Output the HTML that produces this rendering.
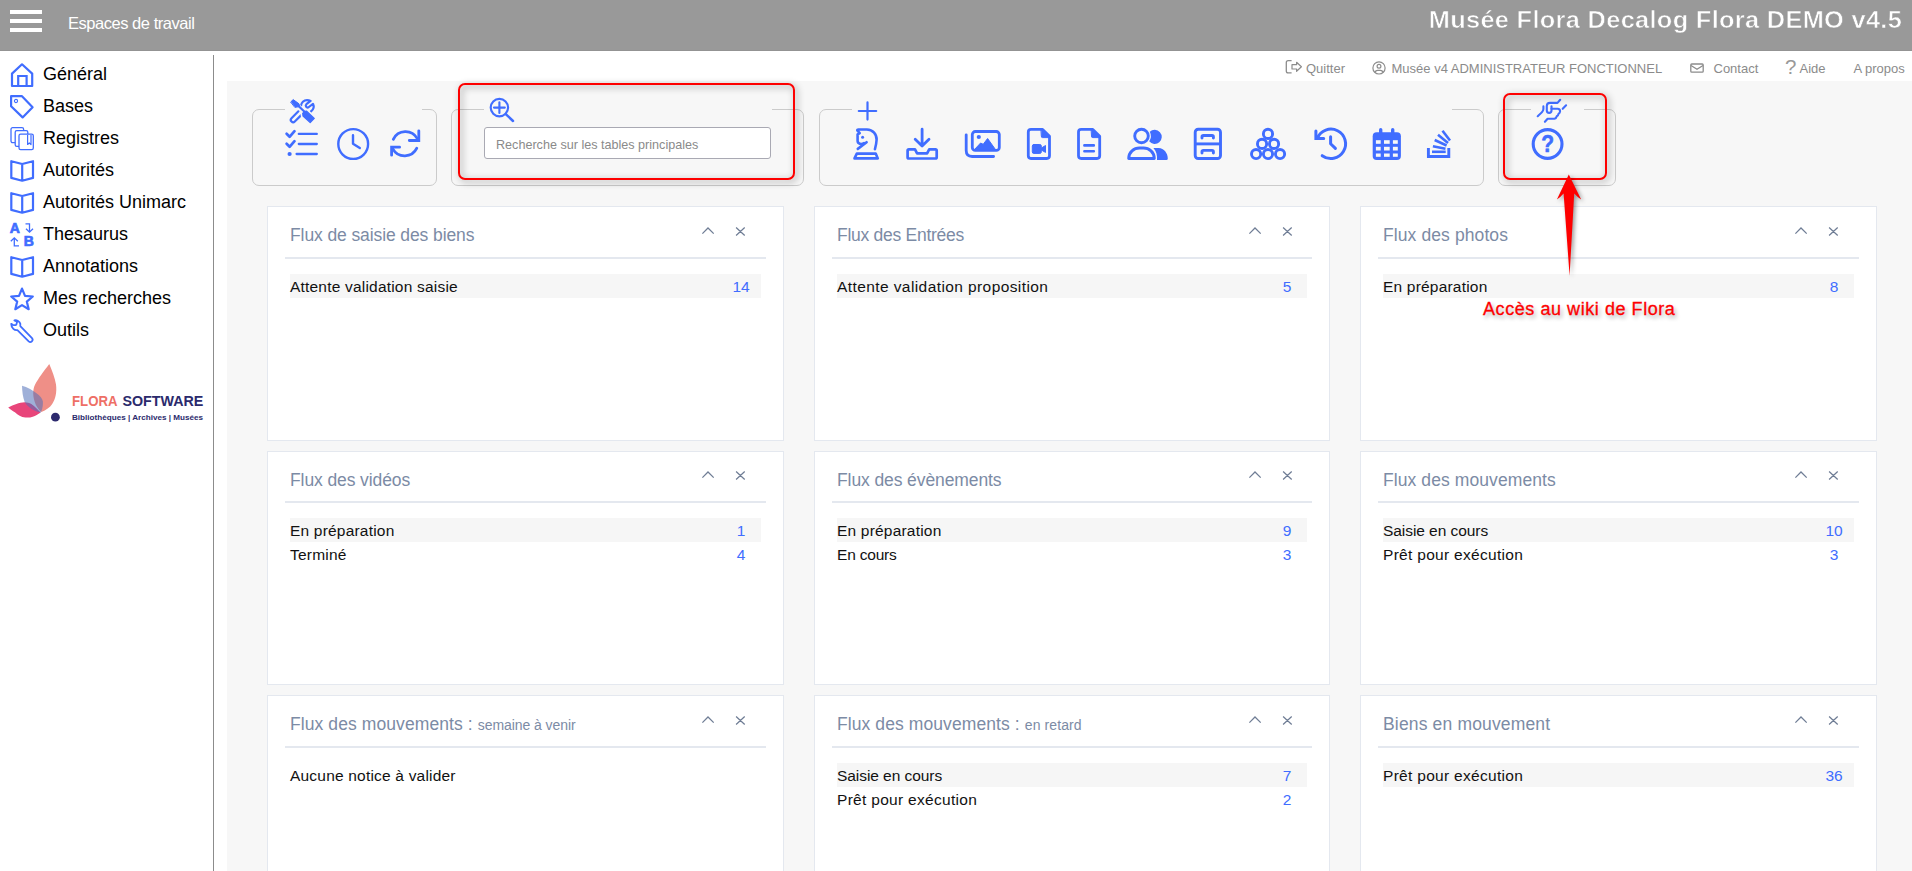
<!DOCTYPE html>
<html lang="fr">
<head>
<meta charset="utf-8">
<title>Musée Flora Decalog Flora DEMO v4.5</title>
<style>
*{box-sizing:border-box}
html,body{margin:0;padding:0}
body{width:1912px;height:871px;overflow:hidden;background:#fff;position:relative;font-family:"Liberation Sans",sans-serif;color:#000}
svg{display:block;overflow:visible}
.abs{position:absolute}
/* header */
#hdr{position:absolute;left:0;top:0;width:1912px;height:51px;background:#999;border-bottom:1px solid #939393}
#burger{position:absolute;left:10px;top:10px;width:32px;height:22px}
#burger i{position:absolute;left:0;width:32px;height:4px;background:#fff}
#ws{position:absolute;left:68px;top:12px;color:#fff;font-size:16.5px;line-height:22px;white-space:nowrap;letter-spacing:-.47px}
#apptitle{position:absolute;right:10px;top:5px;color:#fff;font-weight:bold;font-size:23.2px;line-height:30px;white-space:nowrap;letter-spacing:.3px;transform:scaleX(1.093);transform-origin:100% 50%;-webkit-text-stroke:.55px #999}
/* side */
#side{position:absolute;left:0;top:50px;width:213px;height:821px}
#vline{position:absolute;left:213px;top:55px;width:1px;height:816px;background:#8c8c8c}
.nav{position:absolute;left:0;width:213px;height:32px}
.nav svg{position:absolute;left:8px;top:3px;width:28px;height:28px}
.nav span{position:absolute;left:43px;top:6px;font-size:18px;line-height:22px;white-space:nowrap;color:#000}
/* top menu */
#topmenu{position:absolute;left:227px;top:52px;width:1685px;height:29px;color:#8b8b8b;font-size:13px}
#topmenu a{position:absolute;top:9px;line-height:15px;white-space:nowrap}
#topmenu svg{position:absolute}
/* main */
#main{position:absolute;left:227px;top:81px;width:1685px;height:790px;background:#f7f7f7}
.fs{position:absolute;border:1px solid #cbcbcb;border-radius:7px}
.fs .gap{position:absolute;top:-1px;height:1px;background:#f7f7f7}
#q{position:absolute;left:257px;top:46px;width:287px;height:32px;border:1px solid #a9a9b3;border-radius:3px;background:#fff;padding:3px 0 0 11px;margin:0;font-family:"Liberation Sans",sans-serif;font-size:12.7px;color:#333;outline:none}
#ql{position:absolute;left:269px;top:50px;height:29px;line-height:29px;font-size:12.6px;color:#8a8a8a;white-space:nowrap;pointer-events:none}
.redbox{position:absolute;border:2.6px solid #fe0000;border-radius:7px;filter:drop-shadow(2.5px 2.5px 3.5px rgba(0,0,0,.45))}
#annotxt{position:absolute;left:1483px;top:298px;font-size:18px;line-height:22px;color:#fe0000;white-space:nowrap;letter-spacing:.56px;-webkit-text-stroke:.3px #fe0000;text-shadow:2px 3px 4px rgba(0,0,0,.33)}
/* cards */
.card{position:absolute;width:517px;height:234px;background:#fff;border:1px solid #e4e8ef}
.card h3{position:absolute;left:22px;top:16px;margin:0;font-weight:normal;font-size:17.5px;line-height:24px;color:#7c8ba5;white-space:nowrap;letter-spacing:-.1px}
.card h3 small{font-size:14px;letter-spacing:.1px}
.card .hr{position:absolute;left:17px;right:17px;top:49px;height:2px;background:#e4e8ef}
.card .ctl{position:absolute;left:430px;top:17px;width:52px;height:16px;fill:none;stroke:#6f7d95;stroke-width:1.25}
.row{position:absolute;left:22px;right:22px;height:24px;padding-top:1px;font-size:15.5px;letter-spacing:.2px;line-height:24px;color:#111;white-space:nowrap}
.row.z{background:#f6f6f6}
.row b{position:absolute;right:0;top:1px;letter-spacing:0;width:40px;text-align:center;font-weight:normal;color:#406dff}
</style>
</head>
<body>
<div id="hdr">
  <div id="burger"><i style="top:0"></i><i style="top:9px"></i><i style="top:18px"></i></div>
  <div id="ws">Espaces de travail</div>
  <div id="apptitle">Musée Flora Decalog Flora DEMO v4.5</div>
</div>
<nav id="side">
<a class="nav" style="top:7px"><svg viewBox="0 0 28 28" fill="none" stroke="#406dff" stroke-width="2.2" stroke-linejoin="round"><path d="M4 13.6 L14 4.3 L24.2 13.6 V26 H4 Z"/><path d="M10.2 26 V16 H18.6 V26" stroke-linejoin="miter"/></svg><span>Général</span></a>
<a class="nav" style="top:39px"><svg viewBox="0 0 28 28" fill="none" stroke="#406dff" stroke-width="2.2" stroke-linejoin="round"><path d="M3.1 4.2 H14 L24.6 15.2 L14.6 25.4 L3.1 14.2 Z"/><circle cx="8" cy="9" r="1.6" stroke-width="1.1"/></svg><span>Bases</span></a>
<a class="nav" style="top:71px"><svg viewBox="0 0 28 28" fill="#fff" stroke="#406dff" stroke-width="1.3" stroke-linejoin="round"><rect x="3" y="3.7" width="12.6" height="15" rx="1.6"/><rect x="7.2" y="6.7" width="12.6" height="15.6" rx="1.6"/><rect x="11" y="10.2" width="14.3" height="15.4" rx="1.6"/><path d="M19.6 11 V20.5 L21.3 19 L23 20.5 V11" fill="none" stroke-width="1.2"/></svg><span>Registres</span></a>
<a class="nav" style="top:103px"><svg viewBox="0 0 28 28" fill="none" stroke="#406dff" stroke-width="2.2" stroke-linejoin="round"><path d="M3.3 5.2 L14.2 8 L25 5.2 V21.9 L14.2 24.7 L3.3 21.9 Z M14.2 8 V24.7"/></svg><span>Autorités</span></a>
<a class="nav" style="top:135px"><svg viewBox="0 0 28 28" fill="none" stroke="#406dff" stroke-width="2.2" stroke-linejoin="round"><path d="M3.3 5.2 L14.2 8 L25 5.2 V21.9 L14.2 24.7 L3.3 21.9 Z M14.2 8 V24.7"/></svg><span>Autorités Unimarc</span></a>
<a class="nav" style="top:167px"><svg viewBox="0 0 28 28" fill="none" stroke="#406dff" stroke-width="1.3"><text x="1.8" y="13" font-family="Liberation Sans, sans-serif" font-weight="bold" font-size="14" fill="#406dff" stroke="#406dff" stroke-width=".7">A</text><text x="15.8" y="26.4" font-family="Liberation Sans, sans-serif" font-weight="bold" font-size="14" fill="#406dff" stroke="#406dff" stroke-width=".7">B</text><path d="M17.5 3.8 H21.5 V11.5 M18 8.7 L21.5 12.2 L25 8.7"/><path d="M11 25.8 H6.3 V18.3 M2.8 21.3 L6.3 17.8 L9.8 21.3"/></svg><span>Thesaurus</span></a>
<a class="nav" style="top:199px"><svg viewBox="0 0 28 28" fill="none" stroke="#406dff" stroke-width="2.2" stroke-linejoin="round"><path d="M3.3 5.2 L14.2 8 L25 5.2 V21.9 L14.2 24.7 L3.3 21.9 Z M14.2 8 V24.7"/></svg><span>Annotations</span></a>
<a class="nav" style="top:231px"><svg viewBox="0 0 28 28" fill="none" stroke="#406dff" stroke-width="2.2" stroke-linejoin="round"><path d="M14 4.6 L17 11.9 L24.8 12.5 L18.8 17.6 L20.7 25.2 L14 21.1 L7.3 25.2 L9.2 17.6 L3.2 12.5 L11 11.9 Z"/></svg><span>Mes recherches</span></a>
<a class="nav" style="top:263px"><svg viewBox="0 0 28 28" fill="none" stroke="#406dff" stroke-width="1.8" stroke-linejoin="round"><path d="M6.4 4.4 C8.7 3.8 11.8 5.4 12.3 7.8 L12.3 10.1 L24 22.1 A2.34 2.34 0 0 1 20.7 25.4 L9.4 14.1 C6.8 14.6 3.2 12.4 3.2 7.8 L4.8 8.7 C6 9.3 7.5 9.1 8.3 8.7 L9.1 5.8 Z"/></svg><span>Outils</span></a>
<svg id="logo" class="abs" style="left:0;top:305px;width:213px;height:80px" viewBox="0 355 213 80">
<path d="M49.25 364.1 C44 371 38 379 35.1 384.6 C32.5 390 32.5 397 35.8 404.8 C37.5 408 39.5 410.5 41.4 412 C46 410 50 407.5 52.2 404 C55.5 399.5 57 392 56 384.6 C55 378 52 370.5 49.25 364.1 Z" fill="#ef8f87"/>
<path d="M8.2 407.4 C11 406 13.5 405 16.4 404 C19 403 22 402.2 24.6 402.2 C27 402.3 29.5 403 31.3 404 C35 406.5 38 410 40.7 412.6 C38 414.5 35.5 416 32.8 416.7 C30.5 417.5 28 417.8 25.4 417.5 C21 417 18 415 14.9 412.2 C12.5 410.8 10 409 8.2 407.4 Z" fill="#e8457a"/>
<path d="M22 385.7 C27 387 33 390 38.8 395.1 C42 398 43.5 401 42.9 404 C42.7 407.5 42 410 40.7 412.6 C36 411.5 32.5 410 29.9 407.8 C27 405.5 25.3 403.5 24.6 401.8 C22.8 397 22.2 391.5 22 385.7 Z" fill="#506fb8" fill-opacity=".55"/>
<circle cx="55.4" cy="417.2" r="4.4" fill="#2d2a6e"/>
<text x="72" y="406.2" font-family="Liberation Sans, sans-serif" font-weight="bold" font-size="14" fill="#ee6f66" textLength="45.5" lengthAdjust="spacingAndGlyphs">FLORA</text>
<text x="122.4" y="406.2" font-family="Liberation Sans, sans-serif" font-weight="bold" font-size="14" fill="#2b2a6c" textLength="81" lengthAdjust="spacingAndGlyphs">SOFTWARE</text>
<text x="72" y="420.1" font-family="Liberation Sans, sans-serif" font-weight="bold" font-size="7.6" fill="#2b2a6c" textLength="131" lengthAdjust="spacingAndGlyphs">Bibliothèques | Archives | Musées</text>
</svg>
</nav>
<div id="vline"></div>
<nav id="topmenu">
<svg style="left:1058px;top:7px;width:18px;height:16px" viewBox="1285 59 18 16" fill="none" stroke="#8c8c8c" stroke-width="1.3" stroke-linejoin="round"><path d="M1291.6 60.7 H1288.2 Q1286.3 60.7 1286.3 62.6 V71 Q1286.3 72.9 1288.2 72.9 H1291.6"/><path d="M1292 64.7 H1296.6 V62.3 L1301.4 66.8 L1296.6 71.3 V69 H1292 Z" stroke-width="1.2"/></svg>
<a style="left:1079px">Quitter</a>
<svg style="left:1144px;top:8px;width:16px;height:16px" viewBox="1371 60 16 16" fill="none" stroke="#8c8c8c" stroke-width="1.2"><circle cx="1379" cy="67.9" r="6.1"/><circle cx="1379" cy="66.2" r="1.9"/><path d="M1375 72.4 Q1375.6 70.4 1377.6 70.4 H1380.4 Q1382.4 70.4 1383 72.4"/></svg>
<a style="left:1164.5px">Musée v4 ADMINISTRATEUR FONCTIONNEL</a>
<svg style="left:1462px;top:10px;width:16px;height:12px" viewBox="1689 62 16 12" fill="none" stroke="#8c8c8c" stroke-width="1.3" stroke-linejoin="round"><rect x="1690.8" y="64" width="12.4" height="8.2" rx="1"/><path d="M1691 65.5 L1697 69.3 L1703 65.5"/></svg>
<a style="left:1486.5px">Contact</a>
<a style="left:1558px;top:5px;font-size:20.5px;line-height:20px;color:#999">?</a>
<a style="left:1572.5px">Aide</a>
<a style="left:1626.5px">A propos</a>
</nav>
<div id="main"><div class="fs" style="left:25px;top:28px;width:185px;height:77px"><div class="gap" style="left:32px;width:137px"></div></div>
<div class="fs" style="left:224px;top:28px;width:353px;height:77px"><div class="gap" style="left:32px;width:288px"></div></div>
<div class="fs" style="left:592px;top:28px;width:665px;height:77px"><div class="gap" style="left:32px;width:600px"></div></div>
<div class="fs" style="left:1271px;top:28px;width:118px;height:77px"><div class="gap" style="left:32px;width:53px"></div></div>
<input id="q" type="text" aria-label="Recherche"><label id="ql" for="q">Recherche sur les tables principales</label>
<svg class="abs" style="left:0;top:0;width:1685px;height:120px" viewBox="227 81 1685 120" fill="none" stroke="#406dff" stroke-linecap="round" stroke-linejoin="round">
<!-- outils / réglages -->
<g transform="translate(290 99)" stroke-width="2.2">
<path d="M11 7 C11 3.6 14 1.1 17 1.1 C18.4 1.1 19.6 1.4 20.6 1.9 L16.4 5.2 C15 6.6 16.2 8.9 18.2 8.5 L23 4.8 C24.2 7.4 23.5 10.6 20.9 12.5"/>
<path d="M8.4 12.3 L1.5 19.2 A2.3 2.3 0 0 0 4.8 22.5 L11.2 16.1"/>
<path d="M7 6 L15 13.4 M14.2 12.6 L16.4 12 L24.3 19.4 L20.2 23.6 L13 17 L12.7 14.4 Z" stroke="#f7f7f7" stroke-width="4.4"/>
<path d="M8.5 7 L14.8 13"/>
<path d="M0.9 2.8 L3.2 0.6 L9 4.8 L9.6 7.6 L5.2 8.3 Z" fill="#406dff" stroke-width="1"/>
<path d="M14.2 12.6 L16.4 12 L24.3 19.4 L20.2 23.6 L13 17 L12.7 14.4 Z" fill="#406dff" stroke-width="1.2"/>
</g>
<!-- liste de tâches -->
<g stroke-width="2.3">
<path d="M298.8 133.9 H316.8 M298.8 144 H316.8 M296.6 154 H316.8"/>
<path d="M286.6 133.8 L289.6 136.8 L294.5 131.2 M286.6 143.8 L289.6 146.8 L294.5 141.2" stroke-width="2.7"/>
<circle cx="289.6" cy="154" r="2.1" fill="#406dff" stroke="none"/>
</g>
<!-- horloge -->
<g stroke-width="2.4"><circle cx="353.2" cy="144" r="14.9"/><path d="M353 135.2 V143.8 L359.8 148"/></g>
<!-- actualiser -->
<g stroke-width="2.8">
<path d="M393.3 139.3 A13.5 13.5 0 0 1 417.2 138.4"/>
<path d="M418.8 130.8 V140.5 H409.3" stroke-linejoin="miter"/>
<path d="M416.8 148.2 A13.5 13.5 0 0 1 392.8 148.9"/>
<path d="M391.6 155.2 V147.2 H399.6" stroke-linejoin="miter"/>
</g>
<!-- recherche -->
<g stroke-width="2.15"><circle cx="499.4" cy="107.6" r="8.7"/><path d="M494 107.6 H504.8 M499.4 102.3 V112.9"/><path d="M505.8 114.1 L513 121" stroke-width="2.5"/></g>
<!-- ajouter -->
<path d="M858.8 111 H876.2 M867.5 102.4 V119.6" stroke-width="2.2"/>
<!-- cavalier -->
<g stroke-width="2.6">
<path d="M864 143.2 C861.2 144.8 857.6 144 857.6 140.8 V134.3 L859.7 133.1 L857.3 130.4 Q857.2 129.5 858.3 129.5 H866.9 C872.9 129.7 876.8 134.3 876.6 139.8 C876.4 144 875.6 146.6 874.9 149.2"/>
<path d="M857.8 148.9 L866.6 142.2"/>
<path d="M854.5 158.4 L856.8 153.6 H875.7 L877.8 158.4 Z"/>
<circle cx="862.6" cy="137.2" r="1.5" fill="#406dff" stroke="none"/>
</g>
<!-- entrées -->
<g stroke-width="2.8">
<path d="M922.1 129.2 V145.6 M915.2 139.2 L922.1 146 L929 139.2"/>
<path d="M907.6 150.6 Q907.6 149.3 908.9 149.3 H915 L917.1 153.4 H927.1 L929.2 149.3 H935.4 Q936.7 149.3 936.7 150.6 V157.2 Q936.7 158.5 935.4 158.5 H908.9 Q907.6 158.5 907.6 157.2 Z" stroke-width="2.7"/>
</g>
<!-- photos -->
<g stroke-width="2.8">
<rect x="972.3" y="131.5" width="27" height="18.9" rx="3"/>
<path d="M974.6 149.4 L980.6 143 L983.2 144.3 L987.6 138.5 L995.4 149.4 Z" fill="#406dff" stroke-width="1"/>
<circle cx="978.8" cy="137" r="2.1" fill="#406dff" stroke="none"/>
<path d="M966.2 134.8 V150.6 Q966.2 156.5 972.1 156.5 H993.6"/>
</g>
<!-- vidéos -->
<g stroke-width="2.8">
<path d="M1031 129.4 H1042.6 L1049.5 136.3 V155.8 Q1049.5 158.5 1046.8 158.5 H1031 Q1028.3 158.5 1028.3 155.8 V132.1 Q1028.3 129.4 1031 129.4 Z"/>
<path d="M1041.3 130 L1042.4 129.6 L1049.3 136.5 L1049 137.6 H1042.5 Q1041.3 137.6 1041.3 136.4 Z" fill="#406dff" stroke-width="1"/>
<rect x="1032.3" y="144.5" width="9" height="8.9" rx="1.5" fill="#406dff" stroke-width="1"/>
<path d="M1041.8 147.8 L1045.5 145.5 V152.4 L1041.8 150.3 Z" fill="#406dff" stroke-width="1"/>
</g>
<!-- documents -->
<g stroke-width="2.8">
<path d="M1081.2 129.4 H1092.8 L1099.7 136.3 V155.8 Q1099.7 158.5 1097 158.5 H1081.2 Q1078.5 158.5 1078.5 155.8 V132.1 Q1078.5 129.4 1081.2 129.4 Z"/>
<path d="M1091.5 130 L1092.6 129.6 L1099.5 136.5 L1099.2 137.6 H1092.7 Q1091.5 137.6 1091.5 136.4 Z" fill="#406dff" stroke-width="1"/>
<path d="M1084.4 145.4 H1093.8 M1084.4 151.3 H1093.8" stroke-width="2.6"/>
</g>
<!-- personnes -->
<g stroke-width="2.9">
<circle cx="1141.5" cy="136" r="6.8"/>
<path d="M1128.7 158.5 C1128.7 152 1134 148 1139.5 148 H1143.5 C1149 148 1154.3 152 1154.3 158.5 Z"/>
<path d="M1149.8 131.8 A7.06 7.06 0 1 1 1149.2 141.3 A9.3 9.3 0 0 0 1149.8 131.8 Z" fill="#406dff" stroke="none"/>
<path d="M1153.4 147.9 H1158.6 C1164 148.2 1167.8 153 1167.8 158.4 Q1167.8 159.9 1166.3 159.9 H1157 C1157.4 155 1156.2 151 1153.4 147.9 Z" fill="#406dff" stroke="none"/>
</g>
<!-- classeur -->
<g stroke-width="2.9">
<rect x="1195.2" y="129.2" width="25.3" height="29.3" rx="3"/>
<path d="M1195.2 143.9 H1220.5" stroke-linecap="butt"/>
<path d="M1202 138.1 V136.9 Q1202 135.5 1203.4 135.5 H1212 Q1213.4 135.5 1213.4 136.9 V138.1"/>
<path d="M1202 153 V151.8 Q1202 150.4 1203.4 150.4 H1212 Q1213.4 150.4 1213.4 151.8 V153"/>
</g>
<!-- ensembles -->
<g stroke-width="2.9">
<circle cx="1268" cy="133.9" r="4.6"/><circle cx="1262.05" cy="143.9" r="4.6"/><circle cx="1274.05" cy="143.9" r="4.6"/>
<circle cx="1256.1" cy="154.05" r="4.6"/><circle cx="1268" cy="154.05" r="4.6"/><circle cx="1280.05" cy="154.05" r="4.6"/>
</g>
<!-- historique -->
<g stroke-width="3">
<path d="M1317.3 138.2 A14.7 14.7 0 1 1 1322.2 155.7"/>
<path d="M1315.9 131 V138.5 H1323.7" stroke-linejoin="miter"/>
<path d="M1330.6 136.8 V143.7 L1335.4 148.4"/>
</g>
<!-- calendrier -->
<g fill="#406dff" stroke="none">
<path d="M1376.7 132.3 H1396.9 Q1400.9 132.3 1400.9 136.3 V155.9 Q1400.9 159.9 1396.9 159.9 H1376.7 Q1372.7 159.9 1372.7 155.9 V136.3 Q1372.7 132.3 1376.7 132.3 Z"/>
<rect x="1379" y="128" width="3.4" height="7" rx="1.7"/><rect x="1391" y="128" width="3.4" height="7" rx="1.7"/>
</g>
<g fill="#f7f7f7" stroke="none">
<rect x="1375.9" y="140.2" width="4.8" height="3.6"/><rect x="1384" y="140.2" width="5.7" height="3.6"/><rect x="1392.9" y="140.2" width="4.9" height="3.6"/>
<rect x="1375.9" y="146.8" width="4.8" height="3.7"/><rect x="1384" y="146.8" width="5.7" height="3.7"/><rect x="1392.9" y="146.8" width="4.9" height="3.7"/>
<rect x="1375.9" y="153.5" width="4.8" height="3.3"/><rect x="1384" y="153.5" width="5.7" height="3.3"/><rect x="1392.9" y="153.5" width="4.9" height="3.3"/>
</g>
<!-- piles -->
<g stroke-width="2.6" stroke-linecap="butt" stroke-linejoin="miter">
<path d="M1428.4 148 V156.5 H1448.8 V148" stroke-width="2.9"/>
<path d="M1432 151.8 H1445.7"/>
<path d="M1432.9 146.2 L1445.5 148.8"/>
<path d="M1434.7 140 L1446.6 145.5"/>
<path d="M1438 134.8 L1448 142.9"/>
<path d="M1442.5 130.8 L1450 140.5"/>
</g>
<!-- entraide -->
<g stroke-width="2.1">
<path d="M1537.7 116.2 C1540 114.2 1541.2 113.2 1542 112.2 C1543 111 1543.4 110 1543.4 109.1 V106.4"/>
<path d="M1560.2 99.8 L1557.5 102.9 H1550 Q1546.8 102.9 1546.8 106.1 V110.6 Q1546.8 112.9 1549.15 112.9 Q1551.5 112.9 1551.5 110.6 V106.3"/>
<path d="M1551.5 108.75 H1557.6 Q1560.1 108.9 1560.1 111.2 Q1560 112.9 1558.5 113.9 Q1558.2 115.6 1556.8 116.3 Q1556.3 118.4 1554.5 118.7 H1547.6 L1544.9 121.8"/>
<path d="M1562.7 108.8 L1566.1 105.3"/>
</g>
<!-- aide -->
<circle cx="1547.6" cy="144" r="14.4" stroke-width="3.1"/>
<text transform="translate(1547.6 151.9) scale(1 1.15)" x="0" y="0" text-anchor="middle" font-family="Liberation Sans, sans-serif" font-weight="bold" font-size="21" fill="#406dff" stroke="#406dff" stroke-width=".5">?</text>

</svg>


<section class="card" style="left:40px;top:125px;height:235px;width:517px">
  <h3>Flux de saisie des biens</h3>
  <svg class="ctl" viewBox="430 16 52 16"><path d="M434.4 25.65 L440 20 L445.7 25.65 M468.1 19.5 L476.7 27.5 M476.7 19.5 L468.1 27.5"/></svg>
  <div class="hr" style="top:50px"></div>
  <div class="row z" style="top:67px">Attente validation saisie<b>14</b></div>
</section>
<section class="card" style="left:587px;top:125px;height:235px;width:516px">
  <h3 style="letter-spacing:-.27px">Flux des Entrées</h3>
  <svg class="ctl" viewBox="430 16 52 16"><path d="M434.4 25.65 L440 20 L445.7 25.65 M468.1 19.5 L476.7 27.5 M476.7 19.5 L468.1 27.5"/></svg>
  <div class="hr" style="top:50px"></div>
  <div class="row z" style="top:67px;letter-spacing:0.41px">Attente validation proposition<b>5</b></div>
</section>
<section class="card" style="left:1133px;top:125px;height:235px;width:517px">
  <h3 style="letter-spacing:.1px">Flux des photos</h3>
  <svg class="ctl" viewBox="430 16 52 16"><path d="M434.4 25.65 L440 20 L445.7 25.65 M468.1 19.5 L476.7 27.5 M476.7 19.5 L468.1 27.5"/></svg>
  <div class="hr" style="top:50px"></div>
  <div class="row z" style="top:67px">En préparation<b>8</b></div>
</section>
<section class="card" style="left:40px;top:370px;width:517px">
  <h3>Flux des vidéos</h3>
  <svg class="ctl" style="top:16px" viewBox="430 16 52 16"><path d="M434.4 25.65 L440 20 L445.7 25.65 M468.1 19.5 L476.7 27.5 M476.7 19.5 L468.1 27.5"/></svg>
  <div class="hr"></div>
  <div class="row z" style="top:66px">En préparation<b>1</b></div>
  <div class="row" style="top:90px">Terminé<b>4</b></div>
</section>
<section class="card" style="left:587px;top:370px;width:516px">
  <h3>Flux des évènements</h3>
  <svg class="ctl" style="top:16px" viewBox="430 16 52 16"><path d="M434.4 25.65 L440 20 L445.7 25.65 M468.1 19.5 L476.7 27.5 M476.7 19.5 L468.1 27.5"/></svg>
  <div class="hr"></div>
  <div class="row z" style="top:66px">En préparation<b>9</b></div>
  <div class="row" style="top:90px;letter-spacing:-0.2px">En cours<b>3</b></div>
</section>
<section class="card" style="left:1133px;top:370px;width:517px">
  <h3 style="letter-spacing:.09px">Flux des mouvements</h3>
  <svg class="ctl" style="top:16px" viewBox="430 16 52 16"><path d="M434.4 25.65 L440 20 L445.7 25.65 M468.1 19.5 L476.7 27.5 M476.7 19.5 L468.1 27.5"/></svg>
  <div class="hr"></div>
  <div class="row z" style="top:66px;letter-spacing:-0.06px">Saisie en cours<b>10</b></div>
  <div class="row" style="top:90px;letter-spacing:0.3px">Prêt pour exécution<b>3</b></div>
</section>
<section class="card" style="left:40px;top:614px;width:517px">
  <h3 style="letter-spacing:.09px">Flux des mouvements : <small style="letter-spacing:-.07px">semaine à venir</small></h3>
  <svg class="ctl" viewBox="430 16 52 16"><path d="M434.4 25.65 L440 20 L445.7 25.65 M468.1 19.5 L476.7 27.5 M476.7 19.5 L468.1 27.5"/></svg>
  <div class="hr" style="top:50px"></div>
  <div class="row" style="top:67px">Aucune notice à valider</div>
</section>
<section class="card" style="left:587px;top:614px;width:516px">
  <h3 style="letter-spacing:.09px">Flux des mouvements : <small>en retard</small></h3>
  <svg class="ctl" viewBox="430 16 52 16"><path d="M434.4 25.65 L440 20 L445.7 25.65 M468.1 19.5 L476.7 27.5 M476.7 19.5 L468.1 27.5"/></svg>
  <div class="hr" style="top:50px"></div>
  <div class="row z" style="top:67px;letter-spacing:-0.06px">Saisie en cours<b>7</b></div>
  <div class="row" style="top:91px;letter-spacing:0.3px">Prêt pour exécution<b>2</b></div>
</section>
<section class="card" style="left:1133px;top:614px;width:517px">
  <h3 style="letter-spacing:.16px">Biens en mouvement</h3>
  <svg class="ctl" viewBox="430 16 52 16"><path d="M434.4 25.65 L440 20 L445.7 25.65 M468.1 19.5 L476.7 27.5 M476.7 19.5 L468.1 27.5"/></svg>
  <div class="hr" style="top:50px"></div>
  <div class="row z" style="top:67px;letter-spacing:0.3px">Prêt pour exécution<b>36</b></div>
</section>
</div>
<div id="anno">
<div class="redbox" style="left:457.6px;top:82.9px;width:337px;height:96.8px"></div>
<div class="redbox" style="left:1503.3px;top:93.2px;width:103.6px;height:86.8px"></div>
<svg class="abs" style="left:1540px;top:165px;width:60px;height:120px;filter:drop-shadow(2px 2px 2px rgba(0,0,0,.4))" viewBox="1540 165 60 120"><path d="M1568.8 174.5 L1581.2 199.6 Q1577 196.5 1574.2 193.4 L1569.6 275.8 L1563.6 193.4 Q1561 196.5 1556.9 199.6 Z" fill="#fe0000"/></svg>
<div id="annotxt">Accès au wiki de Flora</div>
</div>
</body>
</html>
